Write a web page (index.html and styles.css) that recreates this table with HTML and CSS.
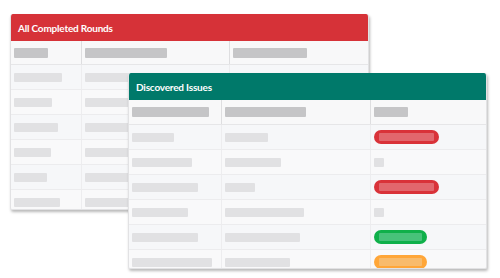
FILE: index.html
```html
<!DOCTYPE html>
<html>
<head>
<meta charset="utf-8">
<link rel="stylesheet" href="styles.css">
</head>
<body>
<div class="stage">
  <section class="card card-rounds">
    <header class="card-head head-red">All Completed Rounds</header>
    <div class="grid grid-rounds">
      <div class="row row-head">
        <div class="cell"><span class="bar bar-dark" style="width:34px"></span></div>
        <div class="cell"><span class="bar bar-dark" style="width:82px"></span></div>
        <div class="cell"><span class="bar bar-dark" style="width:74px"></span></div>
      </div>
      <div class="row">
        <div class="cell"><span class="bar" style="width:48px"></span></div>
        <div class="cell"><span class="bar" style="width:70px"></span></div>
        <div class="cell"><span class="bar" style="width:60px"></span></div>
      </div>
      <div class="row">
        <div class="cell"><span class="bar" style="width:38px"></span></div>
        <div class="cell"><span class="bar" style="width:80px"></span></div>
        <div class="cell"><span class="bar" style="width:50px"></span></div>
      </div>
      <div class="row">
        <div class="cell"><span class="bar" style="width:44px"></span></div>
        <div class="cell"><span class="bar" style="width:66px"></span></div>
        <div class="cell"><span class="bar" style="width:70px"></span></div>
      </div>
      <div class="row">
        <div class="cell"><span class="bar" style="width:37px"></span></div>
        <div class="cell"><span class="bar" style="width:74px"></span></div>
        <div class="cell"><span class="bar" style="width:40px"></span></div>
      </div>
      <div class="row">
        <div class="cell"><span class="bar" style="width:33px"></span></div>
        <div class="cell"><span class="bar" style="width:62px"></span></div>
        <div class="cell"><span class="bar" style="width:55px"></span></div>
      </div>
      <div class="row">
        <div class="cell"><span class="bar" style="width:46px"></span></div>
        <div class="cell"><span class="bar" style="width:78px"></span></div>
        <div class="cell"><span class="bar" style="width:60px"></span></div>
      </div>
    </div>
  </section>

  <section class="card card-issues">
    <header class="card-head head-teal">Discovered Issues</header>
    <div class="grid grid-issues">
      <div class="row row-head">
        <div class="cell"><span class="bar bar-dark" style="width:77px"></span></div>
        <div class="cell"><span class="bar bar-dark" style="width:81px"></span></div>
        <div class="cell"><span class="bar bar-dark" style="width:34px"></span></div>
      </div>
      <div class="row">
        <div class="cell"><span class="bar" style="width:42px"></span></div>
        <div class="cell"><span class="bar" style="width:43px"></span></div>
        <div class="cell"><span class="pill pill-red"></span></div>
      </div>
      <div class="row">
        <div class="cell"><span class="bar" style="width:60px"></span></div>
        <div class="cell"><span class="bar" style="width:56px"></span></div>
        <div class="cell"><span class="dot"></span></div>
      </div>
      <div class="row">
        <div class="cell"><span class="bar" style="width:66px"></span></div>
        <div class="cell"><span class="bar" style="width:30px"></span></div>
        <div class="cell"><span class="pill pill-red"></span></div>
      </div>
      <div class="row">
        <div class="cell"><span class="bar" style="width:56px"></span></div>
        <div class="cell"><span class="bar" style="width:79px"></span></div>
        <div class="cell"><span class="dot"></span></div>
      </div>
      <div class="row">
        <div class="cell"><span class="bar" style="width:66px"></span></div>
        <div class="cell"><span class="bar" style="width:75px"></span></div>
        <div class="cell"><span class="pill pill-green"></span></div>
      </div>
      <div class="row">
        <div class="cell"><span class="bar" style="width:80px"></span></div>
        <div class="cell"><span class="bar" style="width:65px"></span></div>
        <div class="cell"><span class="pill pill-orange"></span></div>
      </div>
    </div>
  </section>
</div>
</body>
</html>
```

FILE: styles.css
```css
* { box-sizing: border-box; }

html, body {
  margin: 0;
  padding: 0;
  background: #ffffff;
  font-family: Lato, "Open Sans", "Liberation Sans", sans-serif;
}

.stage {
  position: relative;
  width: 500px;
  height: 278px;
  padding: 14px 0 0 10px;
}

.card {
  width: 359px;
  height: 196px;
  background: #f9f9fa;
  border: 1px solid #e2e2e4;
  border-top: none;
  border-radius: 3px 3px 2px 2px;
  overflow: hidden;
  box-shadow: 1px 2px 3px rgba(0, 0, 0, 0.28);
}

.card-issues {
  position: absolute;
  left: 128px;
  top: 73px;
}

.card-head {
  height: 27px;
  display: flex;
  align-items: center;
  padding-left: 7px;
  padding-top: 1px;
  color: #ffffff;
  font-size: 10px;
  font-weight: 700;
  letter-spacing: -0.2px;
}

.head-red { background: #d63238; }
.head-teal { background: #00796a; }

.grid { display: flex; flex-direction: column; }

.row {
  display: grid;
  height: 25px;
  border-bottom: 1px solid #ececee;
  flex: none;
}

.row:nth-child(even) { background: #f6f7f9; }

.grid-rounds .row { grid-template-columns: 70px 148px 1fr; }
.grid-issues .row { grid-template-columns: 92px 149px 1fr; }

.row-head { height: 24px; background: #f8f8f9; border-bottom-color: #e6e6e8; }
.grid-issues .row-head { height: 25px; }

.cell {
  display: flex;
  align-items: center;
  padding-left: 3px;
  border-left: 1px solid #ededef;
}

.cell:first-child { border-left: none; padding-left: 3px; }
.row-head .cell { border-left-color: #dedee0; }

.bar {
  display: block;
  height: 9px;
  background: #e1e1e3;
  border-radius: 1px;
}

.bar-dark {
  height: 10px;
  background: #c5c5c7;
}

.dot {
  display: block;
  width: 10px;
  height: 9px;
  background: #e1e1e3;
  border-radius: 1px;
}

.pill {
  display: flex;
  align-items: center;
  justify-content: center;
  width: 65px;
  height: 14px;
  border-radius: 7px;
  padding: 3px 5px;
}

.pill::after {
  content: "";
  display: block;
  width: 100%;
  height: 100%;
  border-radius: 1px;
}

.pill-red { background: #d93239; }
.pill-red::after { background: #e2676d; }

.pill-green { width: 53px; background: #0fb04a; }
.pill-green::after { background: #47c27a; }

.pill-orange { width: 53px; background: #ffa638; }
.pill-orange::after { background: #f8bb6c; }
```
